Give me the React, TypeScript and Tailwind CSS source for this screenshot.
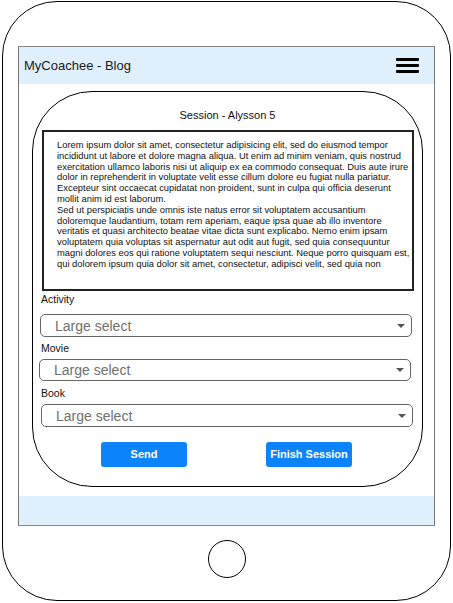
import React from 'react'

// line breaks as in the mockup
const bodyLines = [
  'Lorem ipsum dolor sit amet, consectetur adipisicing elit, sed do eiusmod tempor',
  'incididunt ut labore et dolore magna aliqua. Ut enim ad minim veniam, quis nostrud',
  'exercitation ullamco laboris nisi ut aliquip ex ea commodo consequat. Duis aute irure',
  'dolor in reprehenderit in voluptate velit esse cillum dolore eu fugiat nulla pariatur.',
  'Excepteur sint occaecat cupidatat non proident, sunt in culpa qui officia deserunt',
  'mollit anim id est laborum.',
  'Sed ut perspiciatis unde omnis iste natus error sit voluptatem accusantium',
  'doloremque laudantium, totam rem aperiam, eaque ipsa quae ab illo inventore',
  'veritatis et quasi architecto beatae vitae dicta sunt explicabo. Nemo enim ipsam',
  'voluptatem quia voluptas sit aspernatur aut odit aut fugit, sed quia consequuntur',
  'magni dolores eos qui ratione voluptatem sequi nesciunt. Neque porro quisquam est,',
  'qui dolorem ipsum quia dolor sit amet, consectetur, adipisci velit, sed quia non',
]

function LargeSelect({ className }: { className: string }) {
  return (
    <div
      className={`flex items-center justify-between w-[372px] border-[1.5px] border-[#666] rounded-[5px] pl-[14px] pr-[6px] ${className}`}
    >
      <span className="text-[14px] leading-none text-[#707070]">Large select</span>
      <span className="w-0 h-0 border-x-[4px] border-x-transparent border-t-[4px] border-t-[#555]" />
    </div>
  )
}

export default function App() {
  return (
    <div className="w-[453px] h-[603px] bg-white font-['Liberation_Sans',Arial,sans-serif] text-[#111]">
      <div className="ml-[2px] mt-[1px] w-[449px] h-[600px] border-[1.5px] border-black rounded-[55px] flex flex-col items-center">
        {/* screen */}
        <div className="mt-[44px] w-[417px] border-x border-[#777] flex flex-col">
          <div className="h-[38px] bg-[#dff0fc] border-t border-[#888] flex items-center justify-between pl-[5px] pr-[15px]">
            <span className="text-[13px] text-[#1a1a1a]">MyCoachee - Blog</span>
            <div className="flex flex-col gap-[3px] w-[23px]">
              <span className="h-[3px] bg-black rounded-[1px]" />
              <span className="h-[3px] bg-black rounded-[1px]" />
              <span className="h-[3px] bg-black rounded-[1px]" />
            </div>
          </div>

          <div className="h-[412px] bg-white pt-[7px] pl-[13px]">
            <div className="w-[391px] h-[396px] border-[1.5px] border-black rounded-[60px] flex flex-col">
              <div className="pt-[17px] text-center text-[11px] leading-[13px]">Session - Alysson 5</div>
              <div className="mt-[8px] ml-[9px] w-[372px] h-[161px] border-2 border-[#222] pl-[13px] pt-[8px] text-[9.4px] leading-[10.8px] text-[#111] overflow-hidden">
                {bodyLines.map((line) => (
                  <div key={line} className="whitespace-nowrap">
                    {line}
                  </div>
                ))}
              </div>

              <div className="mt-[1px] ml-[8px] text-[10.5px] leading-[14px]">Activity</div>
              <LargeSelect className="mt-[8px] ml-[7px] h-[23px]" />
              <div className="mt-[4px] ml-[8px] text-[10.5px] leading-[14px]">Movie</div>
              <LargeSelect className="mt-[4px] ml-[6px] h-[22px]" />
              <div className="mt-[5px] ml-[8px] text-[10.5px] leading-[14px]">Book</div>
              <LargeSelect className="mt-[4px] ml-[8px] h-[23px]" />

              <div className="mt-[15px] ml-[68px] flex gap-[79px]">
                <button
                  type="button"
                  className="w-[86px] h-[25px] rounded-[3px] bg-[#0b84fb] text-white text-[11px] font-bold"
                >
                  Send
                </button>
                <button
                  type="button"
                  className="w-[86px] h-[25px] rounded-[3px] bg-[#0b84fb] text-white text-[11px] font-bold"
                >
                  Finish Session
                </button>
              </div>
            </div>
          </div>

          <div className="h-[30px] bg-[#dff0fc] border-b border-[#888]" />
        </div>

        {/* home button */}
        <div className="mt-[14px] w-[38px] h-[38px] rounded-full border-[1.5px] border-black" />
      </div>
    </div>
  )
}
